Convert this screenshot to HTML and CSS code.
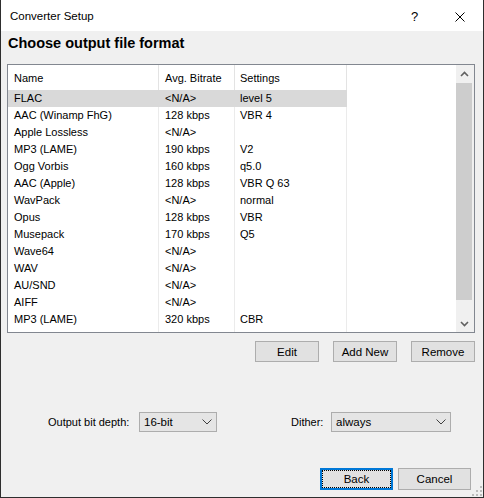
FILE: index.html
```html
<!DOCTYPE html>
<html>
<head>
<meta charset="utf-8">
<link rel="stylesheet" href="styles.css">
</head>
<body>
<div class="window">
  <div class="titlebar">
    <span class="title">Converter Setup</span>
    <div class="caption-btn help">?</div>
    <div class="caption-btn close">
      <svg width="10" height="10" viewBox="0 0 10 10"><path d="M0.5 0.5 L9.5 9.5 M9.5 0.5 L0.5 9.5" stroke="#000" stroke-width="1" fill="none"/></svg>
    </div>
  </div>
  <div class="client">
    <h1 class="heading">Choose output file format</h1>
    <div class="listbox">
      <div class="list">
        <div class="row header"><div class="cell">Name</div><div class="cell">Avg. Bitrate</div><div class="cell">Settings</div><div class="cell rest"></div></div>
        <div class="row selected"><div class="cell">FLAC</div><div class="cell">&lt;N/A&gt;</div><div class="cell">level 5</div><div class="cell rest"></div></div>
        <div class="row"><div class="cell">AAC (Winamp FhG)</div><div class="cell">128 kbps</div><div class="cell">VBR 4</div><div class="cell rest"></div></div>
        <div class="row"><div class="cell">Apple Lossless</div><div class="cell">&lt;N/A&gt;</div><div class="cell"></div><div class="cell rest"></div></div>
        <div class="row"><div class="cell">MP3 (LAME)</div><div class="cell">190 kbps</div><div class="cell">V2</div><div class="cell rest"></div></div>
        <div class="row"><div class="cell">Ogg Vorbis</div><div class="cell">160 kbps</div><div class="cell">q5.0</div><div class="cell rest"></div></div>
        <div class="row"><div class="cell">AAC (Apple)</div><div class="cell">128 kbps</div><div class="cell">VBR Q 63</div><div class="cell rest"></div></div>
        <div class="row"><div class="cell">WavPack</div><div class="cell">&lt;N/A&gt;</div><div class="cell">normal</div><div class="cell rest"></div></div>
        <div class="row"><div class="cell">Opus</div><div class="cell">128 kbps</div><div class="cell">VBR</div><div class="cell rest"></div></div>
        <div class="row"><div class="cell">Musepack</div><div class="cell">170 kbps</div><div class="cell">Q5</div><div class="cell rest"></div></div>
        <div class="row"><div class="cell">Wave64</div><div class="cell">&lt;N/A&gt;</div><div class="cell"></div><div class="cell rest"></div></div>
        <div class="row"><div class="cell">WAV</div><div class="cell">&lt;N/A&gt;</div><div class="cell"></div><div class="cell rest"></div></div>
        <div class="row"><div class="cell">AU/SND</div><div class="cell">&lt;N/A&gt;</div><div class="cell"></div><div class="cell rest"></div></div>
        <div class="row"><div class="cell">AIFF</div><div class="cell">&lt;N/A&gt;</div><div class="cell"></div><div class="cell rest"></div></div>
        <div class="row"><div class="cell">MP3 (LAME)</div><div class="cell">320 kbps</div><div class="cell">CBR</div><div class="cell rest"></div></div>
        <div class="row filler"><div class="cell"></div><div class="cell"></div><div class="cell"></div><div class="cell rest"></div></div>
      </div>
      <div class="vscroll">
        <div class="sb-btn"><svg width="9" height="6" viewBox="0 0 9 6"><path d="M1 5 L4.5 1.5 L8 5" stroke="#606060" stroke-width="1.6" fill="none"/></svg></div>
        <div class="sb-track"><div class="sb-thumb"></div></div>
        <div class="sb-btn"><svg width="9" height="6" viewBox="0 0 9 6"><path d="M1 1 L4.5 4.5 L8 1" stroke="#606060" stroke-width="1.6" fill="none"/></svg></div>
      </div>
    </div>
    <div class="list-actions">
      <div class="button">Edit</div>
      <div class="button">Add New</div>
      <div class="button">Remove</div>
    </div>
    <div class="options">
      <label class="opt-label depth-label">Output bit depth:</label>
      <div class="combo combo-depth"><span>16-bit</span><svg width="10" height="6" viewBox="0 0 10 6"><path d="M0.5 0.5 L5 5 L9.5 0.5" stroke="#404040" stroke-width="1" fill="none"/></svg></div>
      <label class="opt-label dither-label">Dither:</label>
      <div class="combo combo-dither"><span>always</span><svg width="10" height="6" viewBox="0 0 10 6"><path d="M0.5 0.5 L5 5 L9.5 0.5" stroke="#404040" stroke-width="1" fill="none"/></svg></div>
    </div>
    <div class="footer">
      <div class="button wide default">Back</div>
      <div class="button wide">Cancel</div>
    </div>
    <svg class="grip" width="10" height="10" viewBox="0 0 10 10">
      <rect x="8" y="0" width="2" height="2" fill="#bcbcbc"/>
      <rect x="4" y="4" width="2" height="2" fill="#bcbcbc"/>
      <rect x="8" y="4" width="2" height="2" fill="#bcbcbc"/>
      <rect x="0" y="8" width="2" height="2" fill="#bcbcbc"/>
      <rect x="4" y="8" width="2" height="2" fill="#bcbcbc"/>
      <rect x="8" y="8" width="2" height="2" fill="#bcbcbc"/>
    </svg>
  </div>
</div>
</body>
</html>
```

FILE: styles.css
```css
* { box-sizing: border-box; }
html, body { margin: 0; padding: 0; background: #f0f0f0; }
body {
  font-family: "Liberation Sans", Arial, sans-serif;
  font-size: 11px;
  color: #000;
}
.window {
  width: 484px;
  height: 498px;
  border: 1px solid #2e2e2e;
  border-top: none;
  display: flex;
  flex-direction: column;
  background: #f0f0f0;
}
.titlebar {
  height: 31px;
  background: #fff;
  display: flex;
  align-items: center;
  flex: none;
}
.title {
  font-size: 11.5px;
  padding-left: 9px;
  flex: 1;
  padding-top: 1px;
}
.caption-btn {
  width: 46px;
  height: 31px;
  display: flex;
  align-items: center;
  justify-content: center;
}
.help { font-size: 13px; padding-top: 1px; padding-left: 1px; }
.close svg { display: block; margin-top: 2px; }
.client {
  flex: 1;
  display: flex;
  flex-direction: column;
  padding: 0 8px 0 6px;
  position: relative;
}
.heading {
  margin: 2px 0 0 1px;
  font-size: 14.5px;
  line-height: 20px;
  font-weight: bold;
  height: 20px;
}
.listbox {
  margin-top: 11px;
  height: 269px;
  border: 1px solid #828790;
  background: #fff;
  display: flex;
}
.list {
  width: 448px;
  display: flex;
  flex-direction: column;
}
.row {
  display: grid;
  grid-template-columns: 151px 76px 112px 1fr;
  height: 17px;
  line-height: 17px;
}
.row.header { height: 25px; line-height: 26px; }
.row.filler { flex: 1; }
.cell {
  padding-left: 6px;
  border-right: 1px solid #ebebeb;
  white-space: nowrap;
  overflow: hidden;
}
.header .cell { border-right-color: #e3e3e3; }
.cell.rest { border-right: none; }
.selected .cell:not(.rest) { background: #d9d9d9; border-right-color: #d9d9d9; }
.cell:nth-child(3) { padding-left: 5px; }
.vscroll {
  width: 18px;
  background: #f0f0f0;
  display: flex;
  flex-direction: column;
}
.sb-btn {
  width: 16px;
  height: 17px;
  display: flex;
  align-items: center;
  justify-content: center;
  flex: none;
}
.sb-btn svg { display: block; }
.sb-track { flex: 1; padding-top: 1px; }
.sb-thumb { width: 16px; height: 217px; background: #cdcdcd; }
.list-actions {
  margin-top: 8px;
  display: flex;
  justify-content: flex-end;
  gap: 14px;
}
.button {
  width: 64px;
  height: 21px;
  background: #e1e1e1;
  border: 1px solid #adadad;
  display: flex;
  align-items: center;
  justify-content: center;
  font-size: 11.5px;
}
.options {
  margin-top: 50px;
  height: 20px;
  display: flex;
  align-items: center;
  padding-left: 41px;
}
.opt-label { font-size: 11px; }
.depth-label { width: 91px; }
.dither-label { margin-left: 74px; width: 40px; }
.combo {
  height: 20px;
  background: #e5e5e5;
  border: 1px solid #adadad;
  display: flex;
  align-items: center;
  justify-content: space-between;
  padding: 0 4px 0 4px;
  font-size: 11.5px;
}
.combo svg { display: block; }
.combo-depth { width: 78px; }
.combo-dither { width: 120px; }
.footer {
  margin-top: 36px;
  display: flex;
  justify-content: flex-end;
  gap: 5px;
  padding-right: 4px;
}
.button.wide { width: 73px; height: 22px; }
.button.default {
  border: 2px solid #0078d7;
  outline: 1px dotted #000;
  outline-offset: -3px;
}
.grip {
  position: absolute;
  right: 1px;
  bottom: 1px;
}
```
